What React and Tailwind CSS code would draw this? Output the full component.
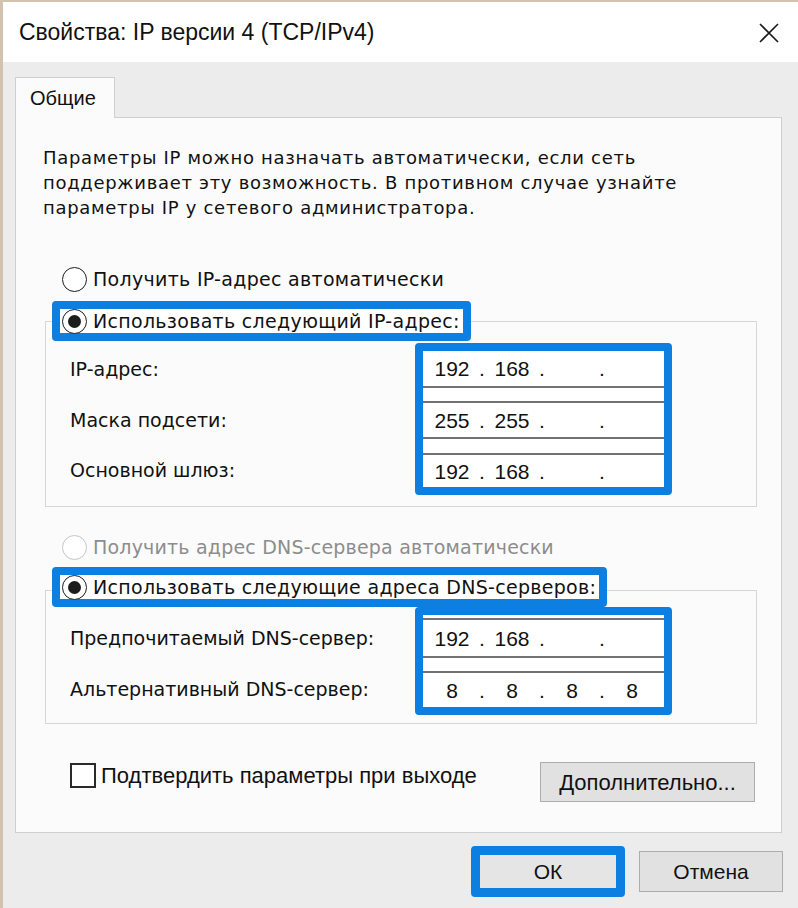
import React from 'react';

function Radio({ checked = false, disabled = false }) {
  return (
    <span
      className={`flex h-[25px] w-[25px] shrink-0 items-center justify-center rounded-full border-[1.5px] bg-white ${
        disabled ? 'border-[#c6c6c6]' : 'border-[#1c1c1c]'
      }`}
    >
      {checked && <span className="h-[13px] w-[13px] rounded-full bg-[#1c1c1c]" />}
    </span>
  );
}

function Octets({ values }) {
  return (
    <div className="flex pl-[3px] font-['Liberation_Sans',sans-serif] text-[21px] leading-none text-[#111]">
      {values.map((v, i) => (
        <React.Fragment key={i}>
          {i > 0 && <span className="w-[8px] text-center">.</span>}
          <span className="w-[52px] text-center">{v}</span>
        </React.Fragment>
      ))}
    </div>
  );
}

function Label({ children, className = '' }) {
  return (
    <div className={`flex items-center whitespace-nowrap ${className}`}>{children}</div>
  );
}

export default function App() {
  const body = "font-['DejaVu_Sans',sans-serif] text-[#111]";
  const ui = "font-['Liberation_Sans',sans-serif] text-[#111]";

  return (
    <div className="flex h-[908px] w-[798px] flex-col overflow-hidden border-l-[3px] border-t-[2px] border-[#d2c2b0] bg-[#ececec]">
      {/* title bar */}
      <div className="flex h-[60px] shrink-0 items-center justify-between bg-white pl-[16px] pr-[18px]">
        <div className={`${ui} text-[23px]`}>Свойства: IP версии 4 (TCP/IPv4)</div>
        <svg width="22" height="22" viewBox="0 0 22 22" className="mt-[1px]">
          <path d="M2 2 L20 20 M20 2 L2 20" stroke="#1a1a1a" strokeWidth="1.6" />
        </svg>
      </div>

      {/* body */}
      <div className="flex flex-1 flex-col pl-[12px] pr-[16px] pt-[15px]">
        <div className="relative z-10 -mb-px flex h-[41px] w-[100px] items-center border border-b-0 border-[#cfcfcf] bg-[#fbfbfb] pl-[14px]">
          <span className={`${ui} text-[20px]`}>Общие</span>
        </div>

        <div className="flex h-[716px] flex-col border border-[#cfcfcf] bg-[#fbfbfb]">
          <div className={`${body} pl-[27px] pt-[27px] text-[18px] leading-[25px] tracking-[0.7px]`}>
            <div className="whitespace-nowrap">Параметры IP можно назначать автоматически, если сеть</div>
            <div className="whitespace-nowrap">поддерживает эту возможность. В противном случае узнайте</div>
            <div className="whitespace-nowrap">параметры IP у сетевого администратора.</div>
          </div>

          {/* IP section */}
          <div className={`${body} mt-[46px] flex h-[26px] items-center gap-[6px] pl-[46px] text-[19px] tracking-[0.3px]`}>
            <Radio />
            <span className="whitespace-nowrap">Получить IP-адрес автоматически</span>
          </div>

          <div className="relative z-10 ml-[36px] mt-[9px] flex h-[40px] w-fit items-center gap-[6px] rounded-[4px] border-[8px] border-[#0d7fe0] bg-white pl-[2px] pr-[3px]">
            <Radio checked />
            <span className={`${body} whitespace-nowrap text-[19px] tracking-[0.3px]`}>Использовать следующий IP-адрес:</span>
          </div>

          <div className="ml-[29px] mr-[24px] -mt-[20px] flex justify-between border border-[#d6d6d6] pb-[11px] pl-[24px] pr-[84px] pt-[21px]">
            <div className={`${body} flex flex-col pt-[8px] text-[19px]`}>
              <Label className="h-[37px]">IP-адрес:</Label>
              <Label className="mt-[13px] h-[38px]">Маска подсети:</Label>
              <Label className="mt-[14px] h-[34px]">Основной шлюз:</Label>
            </div>
            <div className="w-[257px] rounded-[4px] border-[8px] border-[#0d7fe0] bg-white">
              <div className="flex h-[37px] items-center border-b-2 border-[#727272]">
                <Octets values={['192', '168', '', '']} />
              </div>
              <div className="mt-[13px] flex h-[38px] items-center border-y-2 border-[#727272]">
                <Octets values={['255', '255', '', '']} />
              </div>
              <div className="mt-[14px] flex h-[34px] items-center border-t-2 border-[#727272]">
                <Octets values={['192', '168', '', '']} />
              </div>
            </div>
          </div>

          {/* DNS section */}
          <div className={`${body} mt-[27px] flex h-[26px] items-center gap-[6px] pl-[46px] text-[19px] tracking-[0.2px]`}>
            <Radio disabled />
            <span className="whitespace-nowrap text-[#8d8d8d]">Получить адрес DNS-сервера автоматически</span>
          </div>

          <div className="relative z-10 ml-[36px] mt-[7px] flex h-[40px] w-fit items-center gap-[6px] rounded-[4px] border-[8px] border-[#0d7fe0] bg-white pl-[2px] pr-[3px]">
            <Radio checked />
            <span className={`${body} whitespace-nowrap text-[19px] tracking-[0.3px]`}>Использовать следующие адреса DNS-серверов:</span>
          </div>

          <div className="ml-[29px] mr-[24px] -mt-[17px] flex justify-between border border-[#d6d6d6] pb-[8px] pl-[24px] pr-[84px] pt-[16px]">
            <div className={`${body} flex flex-col pt-[11px] text-[19px]`}>
              <Label className="h-[40px]">Предпочитаемый DNS-сервер:</Label>
              <Label className="mt-[13px] h-[36px]">Альтернативный DNS-сервер:</Label>
            </div>
            <div className="w-[257px] rounded-[4px] border-[8px] border-[#0d7fe0] bg-white pt-[3px]">
              <div className="flex h-[40px] items-center border-y-2 border-[#727272]">
                <Octets values={['192', '168', '', '']} />
              </div>
              <div className="mt-[13px] flex h-[36px] items-center border-t-2 border-[#727272]">
                <Octets values={['8', '8', '8', '8']} />
              </div>
            </div>
          </div>

          {/* confirm + advanced */}
          <div className="mt-[35px] flex items-start justify-between pl-[54px] pr-[26px]">
            <div className="flex items-center gap-[5px]">
              <span className="h-[25px] w-[26px] border-2 border-[#2a2a2a] bg-white" />
              <span className={`${ui} whitespace-nowrap text-[22px]`}>Подтвердить параметры при выходе</span>
            </div>
            <button className={`${ui} mt-[3px] flex h-[40px] w-[215px] items-center justify-center border border-[#adadad] bg-[#e1e1e1] text-[22px]`}>
              Дополнительно...
            </button>
          </div>
        </div>

        {/* dialog buttons */}
        <div className="-mr-[1px] flex items-start justify-end gap-[14px]">
          <div className="mt-[13px] rounded-[4px] border-[9px] border-[#0d7fe0]">
            <button className={`${ui} flex h-[33px] w-[136px] items-center justify-center bg-[#e5e5e5] text-[21px]`}>ОК</button>
          </div>
          <button className={`${ui} mt-[18px] flex h-[41px] w-[144px] items-center justify-center border border-[#adadad] bg-[#e1e1e1] text-[21px]`}>
            Отмена
          </button>
        </div>
      </div>
    </div>
  );
}
